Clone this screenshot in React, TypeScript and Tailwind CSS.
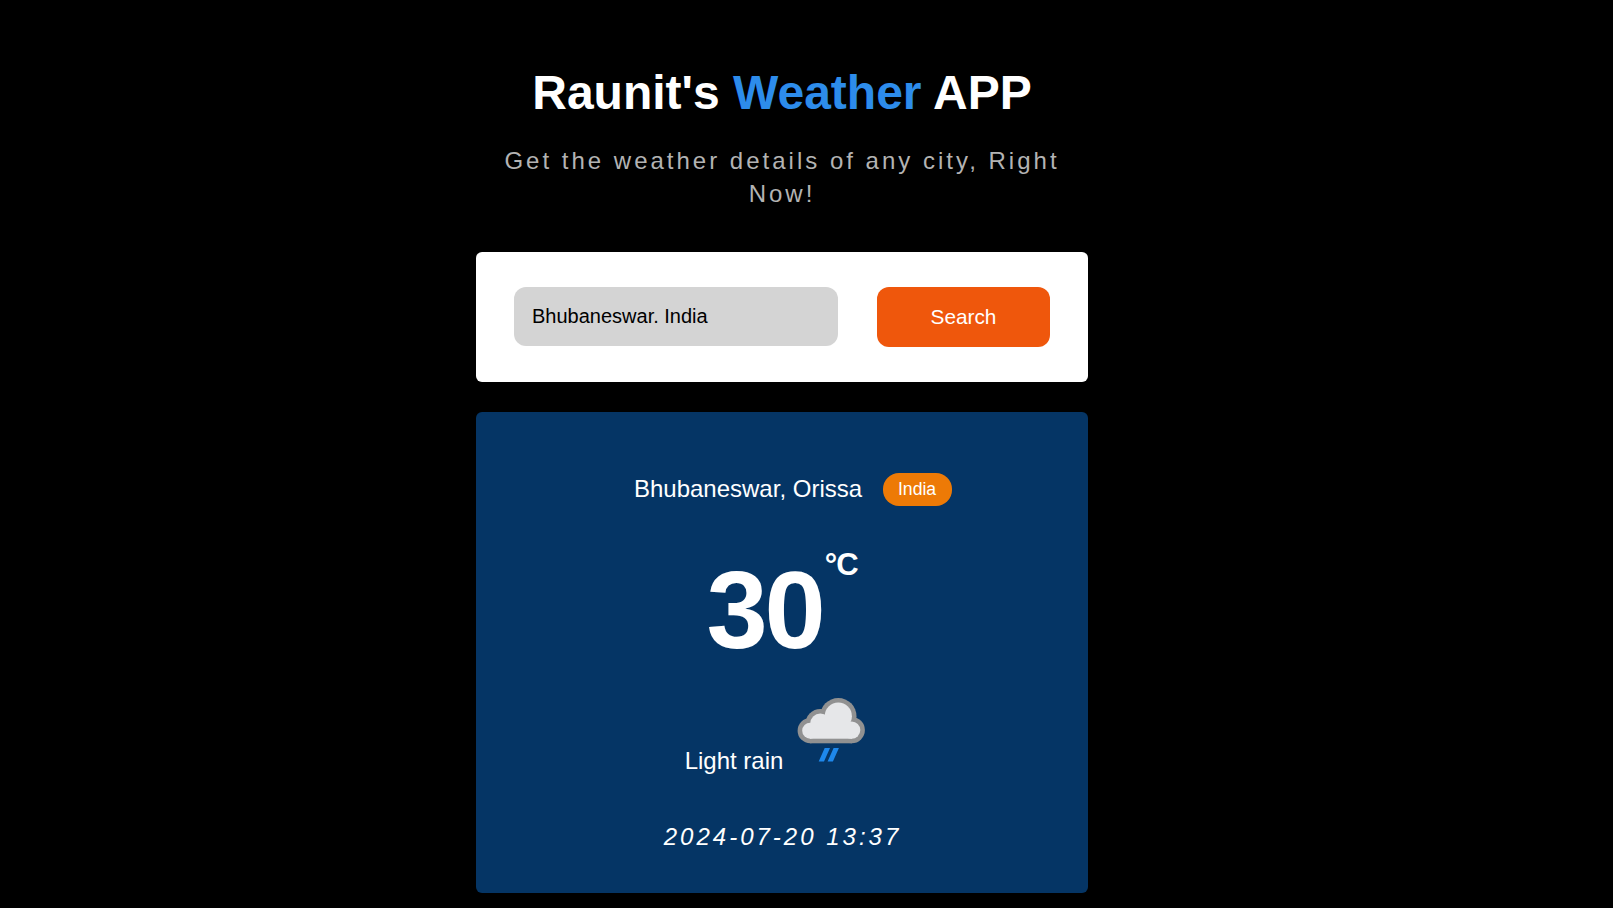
import { useState } from "react";

function LightRainIcon() {
  return (
    <svg className="h-[100px] w-[100px]" viewBox="0 0 100 100" aria-hidden="true">
      <g fill="#919191">
        <circle cx="30.200" cy="50.700" r="12.600" />
        <circle cx="40.300" cy="43.700" r="14.700" />
        <circle cx="58.300" cy="36.200" r="18.200" />
        <circle cx="71.700" cy="50.100" r="13.200" />
        <rect x="30" y="44" width="42" height="19.300" />
      </g>
      <g fill="#e6e7e9">
        <circle cx="30.200" cy="50.700" r="8" />
        <circle cx="40.300" cy="43.700" r="10.100" />
        <circle cx="58.300" cy="36.200" r="13.600" />
        <circle cx="71.700" cy="50.100" r="8.600" />
        <rect x="30" y="46" width="42" height="12.700" />
      </g>
      <path d="M44.700 68h5.300l-6 13.500h-5.300zM53.600 68h5.300l-6 13.500h-5.300z" fill="#1e88ec" />
    </svg>
  );
}

export default function App() {
  const [city, setCity] = useState("Bhubaneswar. India");
  return (
    <main className="flex min-h-screen flex-col items-center bg-black pr-[49px] pb-[15px] font-['Liberation_Sans',Arial,sans-serif] text-white">
      <div className="flex w-[612px] flex-col">
        <header className="pt-[69px] text-center">
          <h1 className="text-5xl leading-[48px] font-bold">
            Raunit's <span className="text-[#2d8ceb]">Weather</span> APP
          </h1>
          <p className="mt-[27px] text-2xl leading-[33px] tracking-[3px] text-[#b3b3b3]">
            Get the weather details of any city, Right Now!
          </p>
        </header>

        <form
          className="mt-[42px] flex h-[130px] items-start justify-between rounded-md bg-white px-[38px] pt-[35px]"
          onSubmit={(e) => e.preventDefault()}
        >
          <input
            className="h-[59px] w-[324px] rounded-xl bg-[#d4d4d4] px-[18px] text-xl text-black outline-none"
            value={city}
            onChange={(e) => setCity(e.target.value)}
          />
          <button className="h-[60px] w-[173px] rounded-xl bg-[#ef570c] text-[20.8px] text-white">
            Search
          </button>
        </form>

        <section className="mt-[30px] flex h-[481px] flex-col items-center rounded-md bg-[#053565] pt-[61px]">
          <div className="flex items-center gap-[21px] pl-[22px] text-2xl leading-[33px]">
            <span className="pb-0.5 leading-[31px]">Bhubaneswar, Orissa</span>
            <span className="flex h-[33px] w-[69px] items-center justify-center rounded-2xl bg-[#ed7a06] pr-px text-[17.6px]">
              India
            </span>
          </div>
          <div className="mt-[42px] flex items-start font-bold">
            <span className="pt-[7px] text-[110px] leading-[110px] tracking-[-3px]">30</span>
            <span className="pt-0.5 pl-0.5 text-[31px] leading-[30px] tracking-[-1px]">°C</span>
          </div>
          <div className="mt-[15px] flex items-end pl-px text-2xl">
            <span className="-mr-[3px] pb-[3px] leading-[33px]">Light rain</span>
            <LightRainIcon />
          </div>
          <p className="mt-10 pl-px text-2xl leading-[33px] tracking-[3px] italic">2024-07-20 13:37</p>
        </section>
      </div>
    </main>
  );
}
